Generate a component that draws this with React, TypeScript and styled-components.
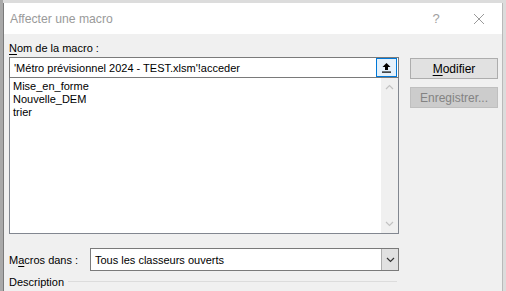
import React from "react";
import styled, { createGlobalStyle } from "styled-components";

const Global = createGlobalStyle`
  html, body {
    margin: 0;
    padding: 0;
    width: 506px;
    height: 291px;
    overflow: hidden;
    background: #f7f7f7;
  }
  * { box-sizing: border-box; }
`;

const Desk = styled.div`
  width: 506px;
  height: 291px;
  padding: 3px 3px 0 3px;
  background: linear-gradient(#a9a9a9, #a9a9a9) left / 3px 100% no-repeat, #dcdcdc;
  font-family: "Liberation Sans", Arial, sans-serif;
  font-size: 11px;
  color: #000;
`;

const Dialog = styled.div`
  height: 100%;
  background: #f0f0f0;
  border-left: 1px solid #7a7a7a;
  border-right: 1px solid #b9b9b9;
  display: flex;
  flex-direction: column;
`;

const TitleBar = styled.div`
  height: 31px;
  background: #fff;
  display: flex;
  align-items: center;
  padding: 0 0 0 6px;
`;

const Title = styled.div`
  flex: 1;
  color: #9a9a9a;
  font-size: 12.2px;
`;

const TitleBtn = styled.div<{ $shift?: number }>`
  width: 46px;
  height: 31px;
  margin-right: ${p => p.$shift ?? 0}px;
  display: flex;
  align-items: center;
  justify-content: center;
  color: #a0a0a0;
  font-size: 13px;
`;

const Body = styled.div`
  flex: 1;
  display: grid;
  grid-template-columns: 390px 88px;
  column-gap: 11px;
  padding: 6px 0 0 5px;
`;

const Left = styled.div`
  display: flex;
  flex-direction: column;
`;

const Right = styled.div`
  display: flex;
  flex-direction: column;
  gap: 8px;
  padding-top: 18px;
  font-size: 12px;
`;

const Label = styled.div`
  height: 17px;
  line-height: 17px;
  white-space: nowrap;
`;

const Key = styled.span`
  text-decoration: underline;
  text-underline-offset: 2px;
`;

const NameInput = styled.div`
  height: 21px;
  background: #fff;
  border: 1px solid #7a7a7a;
  display: flex;
  align-items: center;
  padding-left: 4px;
  white-space: nowrap;
`;

const InputText = styled.div`
  flex: 1;
`;

const CollapseBtn = styled.div`
  width: 21px;
  height: 19px;
  margin-right: 1px;
  background: #e5f1fb;
  border: 1px solid #0078d7;
  display: flex;
  align-items: center;
  justify-content: center;
`;

const ListBox = styled.div`
  height: 156px;
  background: #fff;
  border: 1px solid #828790;
  border-top: none;
  display: flex;
`;

const Items = styled.div`
  flex: 1;
  padding: 2px 0 0 3px;
`;

const Item = styled.div`
  height: 13px;
  line-height: 13px;
`;

const ScrollBar = styled.div`
  width: 17px;
  background: #f0f0f0;
  display: flex;
  flex-direction: column;
  justify-content: space-between;
  align-items: center;
  padding: 6px 0;
`;

const Row = styled.div`
  display: flex;
  align-items: center;
  margin-top: 14px;
  height: 23px;
`;

const RowLabel = styled.div`
  width: 81px;
  white-space: nowrap;
`;

const Select = styled.div`
  flex: 1;
  height: 23px;
  background: #fff;
  border: 1px solid #7a7a7a;
  display: flex;
  align-items: center;
  padding-left: 4px;
`;

const SelectText = styled.div`
  flex: 1;
`;

const DropBtn = styled.div`
  width: 17px;
  height: 21px;
  background: #e1e1e1;
  border-left: 1px solid #adadad;
  display: flex;
  align-items: center;
  justify-content: center;
`;

const Group = styled.div`
  display: flex;
  align-items: center;
  gap: 4px;
  margin-top: 1px;
  height: 19px;
`;

const GroupLine = styled.div`
  flex: 1;
  height: 1px;
  background: #dcdcdc;
  margin-right: 2px;
`;

const Button = styled.div<{ disabled?: boolean }>`
  height: 21px;
  background: ${p => (p.disabled ? "#cccccc" : "#e1e1e1")};
  border: 1px solid ${p => (p.disabled ? "#bfbfbf" : "#adadad")};
  color: ${p => (p.disabled ? "#838383" : "#000")};
  display: flex;
  align-items: center;
  justify-content: center;
`;

const Chevron = ({ up, color }: { up?: boolean; color: string }) => (
  <svg width="9" height="6" viewBox="0 0 9 6">
    <path
      d={up ? "M1 5 L4.5 1.5 L8 5" : "M1 1 L4.5 4.5 L8 1"}
      fill="none"
      stroke={color}
      strokeWidth="1.2"
    />
  </svg>
);

const App = () => (
  <>
    <Global />
    <Desk>
      <Dialog>
        <TitleBar>
          <Title>Affecter une macro</Title>
          <TitleBtn $shift={-3}>?</TitleBtn>
          <TitleBtn>
            <svg width="12" height="12" viewBox="0 0 12 12">
              <path d="M1 1 L11 11 M11 1 L1 11" stroke="#9a9a9a" strokeWidth="1" />
            </svg>
          </TitleBtn>
        </TitleBar>
        <Body>
          <Left>
            <Label>
              <Key>N</Key>om de la macro :
            </Label>
            <NameInput>
              <InputText>'Métro prévisionnel 2024 - TEST.xlsm'!acceder</InputText>
              <CollapseBtn>
                <svg width="11" height="11" viewBox="0 0 11 11">
                  <path d="M5.5 1 L1.5 5 H4 V8 H7 V5 H9.5 Z" fill="#000" />
                  <rect x="1" y="9.5" width="9" height="1.2" fill="#000" />
                </svg>
              </CollapseBtn>
            </NameInput>
            <ListBox>
              <Items>
                <Item>Mise_en_forme</Item>
                <Item>Nouvelle_DEM</Item>
                <Item>trier</Item>
              </Items>
              <ScrollBar>
                <Chevron up color="#c2c2c2" />
                <Chevron color="#c2c2c2" />
              </ScrollBar>
            </ListBox>
            <Row>
              <RowLabel>
                M<Key>a</Key>cros dans :
              </RowLabel>
              <Select>
                <SelectText>Tous les classeurs ouverts</SelectText>
                <DropBtn>
                  <Chevron color="#333" />
                </DropBtn>
              </Select>
            </Row>
            <Group>
              Description
              <GroupLine />
            </Group>
          </Left>
          <Right>
            <Button>
              <span>
                <Key>M</Key>odifier
              </span>
            </Button>
            <Button disabled>Enregistrer...</Button>
          </Right>
        </Body>
      </Dialog>
    </Desk>
  </>
);

export default App;
